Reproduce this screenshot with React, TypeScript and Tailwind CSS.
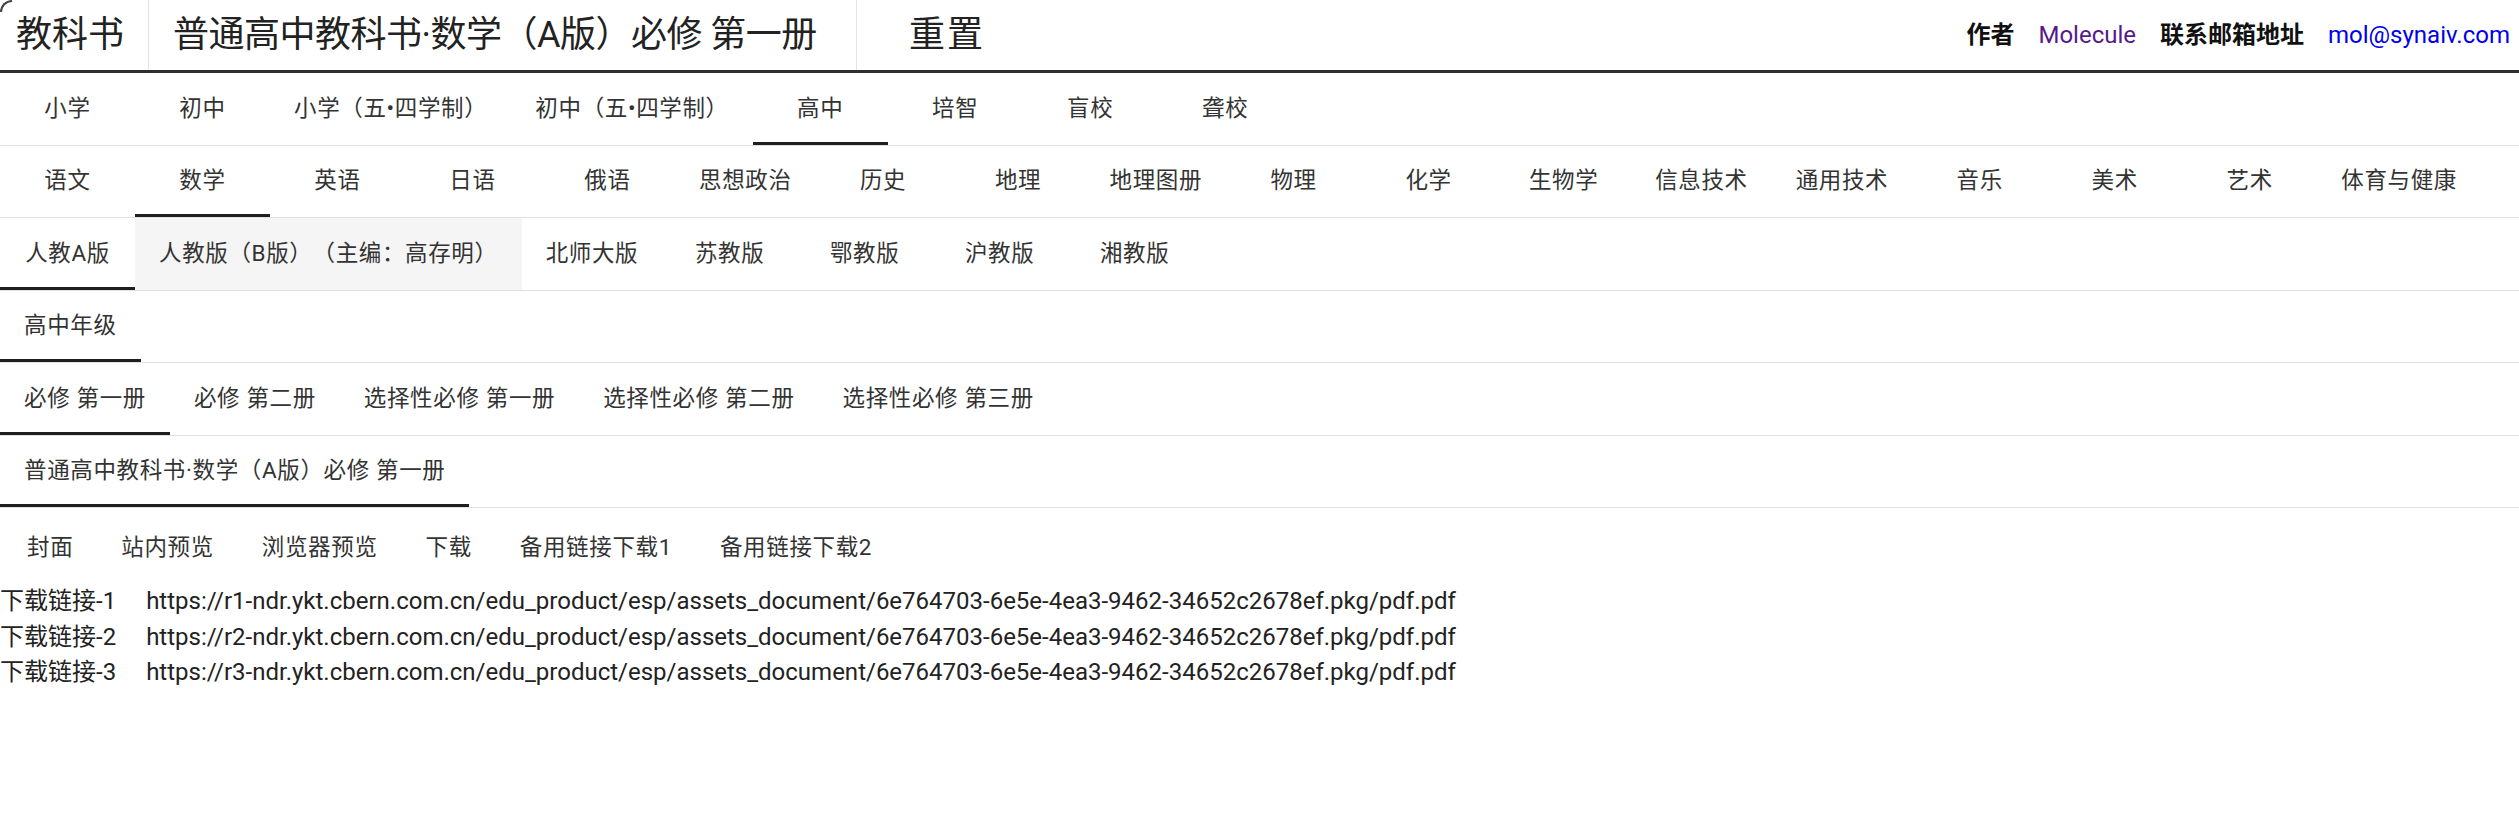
import React from 'react';
import clsx from 'clsx';

const levels = ['小学', '初中', '小学（五•四学制）', '初中（五•四学制）', '高中', '培智', '盲校', '聋校'];
const subjects = [
  '语文', '数学', '英语', '日语', '俄语', '思想政治', '历史', '地理', '地理图册',
  '物理', '化学', '生物学', '信息技术', '通用技术', '音乐', '美术', '艺术', '体育与健康',
];
const editions = ['人教A版', '人教版（B版）（主编：高存明）', '北师大版', '苏教版', '鄂教版', '沪教版', '湘教版'];
const grades = ['高中年级'];
const volumes = ['必修 第一册', '必修 第二册', '选择性必修 第一册', '选择性必修 第二册', '选择性必修 第三册'];
const books = ['普通高中教科书·数学（A版）必修 第一册'];
const actions = ['封面', '站内预览', '浏览器预览', '下载', '备用链接下载1', '备用链接下载2'];

const pdfPath = 'ndr.ykt.cbern.com.cn/edu_product/esp/assets_document/6e764703-6e5e-4ea3-9462-34652c2678ef.pkg/pdf.pdf';

interface TabProps {
  label: string;
  selected?: boolean;
  hovered?: boolean;
}

const Tab: React.FC<TabProps> = ({ label, selected, hovered }) => (
  <div
    className={clsx(
      'relative flex h-[71.5px] min-w-[135px] shrink-0 items-center justify-center whitespace-nowrap px-[24px] text-[22.5px] tracking-[0.64px] text-[#333]',
      hovered && 'bg-[#f5f5f5]'
    )}
  >
    {label}
    {selected && <span className="absolute bottom-0 left-0 right-0 h-[3px] bg-[#1f1f1f]" />}
  </div>
);

interface TabRowProps {
  items: string[];
  selected: number;
  hovered?: number;
}

const TabRow: React.FC<TabRowProps> = ({ items, selected, hovered }) => (
  <div className="flex border-b-[1.5px] border-[#e0e0e0]">
    {items.map((item, i) => (
      <Tab key={item} label={item} selected={i === selected} hovered={i === hovered} />
    ))}
  </div>
);

const App: React.FC = () => {
  return (
    <div className="relative min-h-screen w-full bg-white font-[Roboto,'Noto_Sans_CJK_SC',sans-serif] text-[#222] [text-spacing-trim:space-all]">
      {/* window corner */}
      <span className="absolute left-0 top-0 h-[12px] w-[12px] rounded-tl-[12px] border-l-2 border-t-2 border-[#444]" />

      {/* Header */}
      <header className="flex h-[73px] items-stretch border-b-[3px] border-[#2e2e2e]">
        <div className="flex items-center border-r-[1.5px] border-[#e5e5e5] pl-4 pr-6 text-[36px] leading-none">
          教科书
        </div>
        <div className="flex w-[708px] shrink-0 items-center border-r-[1.5px] border-[#e5e5e5] pl-6 text-[36px] leading-none tracking-[-0.5px]">
          普通高中教科书·数学（A版）必修 第一册
        </div>
        <div className="flex items-center pl-[52px] text-[36px] leading-none tracking-[2px]">重置</div>

        <div className="ml-auto flex items-center gap-[24px] pr-[9px] text-[24px]">
          <span className="font-bold text-[#111]">作者</span>
          <a className="text-[#551a8b]">Molecule</a>
          <span className="font-bold text-[#111]">联系邮箱地址</span>
          <a className="text-[#0000ee]">mol@synaiv.com</a>
        </div>
      </header>

      {/* Category tabs */}
      <TabRow items={levels} selected={4} />
      <TabRow items={subjects} selected={1} />
      <TabRow items={editions} selected={0} hovered={1} />
      <TabRow items={grades} selected={0} />
      <TabRow items={volumes} selected={0} />
      <TabRow items={books} selected={0} />

      {/* Actions */}
      <div className="mb-[8px] mt-[11px] flex gap-[24px] pl-[15px]">
        {actions.map((a) => (
          <button
            key={a}
            className="whitespace-nowrap px-[12px] py-[9px] text-[22.5px] leading-[1.75] tracking-[0.64px] text-[#333]"
          >
            {a}
          </button>
        ))}
      </div>

      {/* Download links */}
      <div className="text-[24px] leading-[35.5px] text-[#222]">
        {[1, 2, 3].map((n) => (
          <div key={n} className="flex gap-[30px] whitespace-nowrap">
            <span>下载链接-{n}</span>
            <span>{`https://r${n}-${pdfPath}`}</span>
          </div>
        ))}
      </div>
    </div>
  );
};

export default App;
